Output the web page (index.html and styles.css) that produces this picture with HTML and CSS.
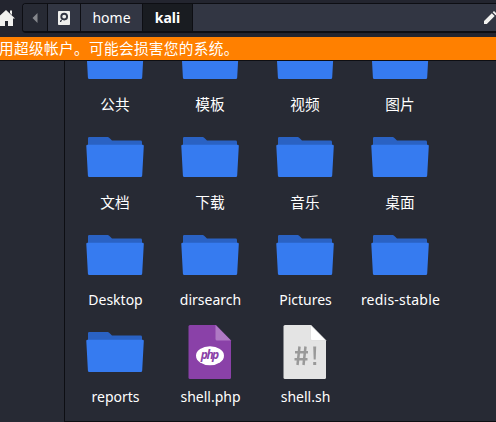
FILE: index.html
```html
<!DOCTYPE html>
<html lang="zh-CN">
<head>
<meta charset="utf-8">
<title>kali</title>
<link rel="stylesheet" href="styles.css">
</head>
<body>
<svg width="0" height="0" class="defs">
  <symbol id="folder" viewBox="0 0 64 64">
    <path fill="#2a62c4" d="M5 26V13.2Q5 12 6.2 12H24.5Q25.500 12 26.200 12.700L29 15.600H57.500Q59 15.600 59 17V26Z"/>
    <path fill="#367bf0" d="M4.500 19.700H59.600Q60.900 19.700 60.800 21L59.200 50.500Q59.100 52 57.800 52H6.200Q5 52 4.900 50.500L3.300 21Q3.200 19.700 4.500 19.700Z"/>
  </symbol>
</svg>
<header class="toolbar">
  <svg class="home" width="17" height="18" viewBox="0 0 17 18"><path fill="#f1f1ef" d="M6 1L15 9.500H13V17H8V12H5V17H-1V7.500ZM10 1.500H12V6L10 4Z"/></svg>
  <nav class="path">
    <span class="back"><svg width="6" height="10" viewBox="0 0 6 10"><path fill="#85878c" d="M5.500 0V10L.500 5Z"/></svg></span>
    <span class="crumb drive"><svg width="12" height="14" viewBox="0 0 12 14"><rect width="12" height="14" rx=".8" fill="#efefed"/><circle cx="6.200" cy="5.600" r="2.900" fill="none" stroke="#323643" stroke-width="1.900"/><path d="M2 9.500L4.500 8.500 3 11H2Z" fill="#323643"/></svg></span>
    <span class="crumb parent">home</span>
    <span class="crumb current">kali</span>
    <span class="rest"><svg width="14" height="14" viewBox="0 0 14 14"><path fill="#f1f1ef" d="M0 10L7.800 2.200 10.700 5.100 2.800 13H0ZM8.700 1.300L10 0 13 3 11.600 4.300Z"/></svg></span>
  </nav>
</header>
<div class="warning">用超级帐户。可能会损害您的系统。</div>
<div class="main">
  <aside class="side"></aside>
  <main class="files">
    <div class="file zh"><svg class="icon"><use href="#folder"/></svg><span>公共</span></div>
    <div class="file zh"><svg class="icon"><use href="#folder"/></svg><span>模板</span></div>
    <div class="file zh"><svg class="icon"><use href="#folder"/></svg><span>视频</span></div>
    <div class="file zh"><svg class="icon"><use href="#folder"/></svg><span>图片</span></div>
    <div class="file zh"><svg class="icon"><use href="#folder"/></svg><span>文档</span></div>
    <div class="file zh"><svg class="icon"><use href="#folder"/></svg><span>下载</span></div>
    <div class="file zh"><svg class="icon"><use href="#folder"/></svg><span>音乐</span></div>
    <div class="file zh"><svg class="icon"><use href="#folder"/></svg><span>桌面</span></div>
    <div class="file"><svg class="icon"><use href="#folder"/></svg><span>Desktop</span></div>
    <div class="file"><svg class="icon"><use href="#folder"/></svg><span>dirsearch</span></div>
    <div class="file"><svg class="icon"><use href="#folder"/></svg><span>Pictures</span></div>
    <div class="file loose"><svg class="icon"><use href="#folder"/></svg><span>redis-stable</span></div>
    <div class="file"><svg class="icon"><use href="#folder"/></svg><span>reports</span></div>
    <div class="file">
      <svg class="icon" viewBox="0 0 64 64">
        <path fill="#8a41a8" d="M12 5H38L53 20.500V57.500Q53 59 51.500 59H12Q10.500 59 10.500 57.500V6.500Q10.500 5 12 5Z"/>
        <path fill="#af79c4" d="M37.500 5L53 20.500H39Q37.500 20.500 37.500 19Z"/>
        <ellipse cx="32" cy="35.800" rx="14" ry="9.500" fill="#fff"/>
        <text class="php" x="32" y="39" text-anchor="middle" textLength="18.500">php</text>
      </svg><span>shell.php</span></div>
    <div class="file">
      <svg class="icon" viewBox="0 0 64 64">
        <path fill="#e4e4e4" d="M12 5H38L53 20.500V57.500Q53 59 51.500 59H12Q10.500 59 10.500 57.500V6.500Q10.500 5 12 5Z"/>
        <path fill="#fff" stroke="#d0d0d0" stroke-width=".5" d="M37.500 5L53 20.500H39Q37.500 20.500 37.500 19Z"/>
        <path fill="none" stroke="#999" stroke-width="2.500" d="M26.500 26.500L24.500 45M32.500 26.500L30.500 45M22 32.300H35M21.500 39.300H34.500"/>
        <path fill="#999" d="M40.200 26.500H43.200L42.700 39.500H40.700ZM40.200 42H43.200V45H40.200Z"/>
      </svg><span>shell.sh</span></div>
  </main>
</div>
</body>
</html>
```
FILE: styles.css
```css
* { box-sizing: border-box; }
body {
  margin: 0;
  height: 422px;
  overflow: hidden;
  display: flex;
  flex-direction: column;
  background: #272a34;
  color: #fff;
  font: 14px/20px "Noto Sans", "Noto Sans CJK SC", sans-serif;
}
.defs { position: absolute; }
.toolbar {
  height: 37px;
  flex: none;
  display: flex;
  padding-top: 3px;
  background: #23252f;
}
.home { margin: 6px 5px 0 0; flex: none; }
.path {
  flex: 1;
  height: 30px;
  display: flex;
  border: 1px solid #0d0e13;
  border-bottom-width: 2px;
  border-right: 0;
  border-radius: 4px 0 0 4px;
  background: #323643;
  overflow: hidden;
}
.back, .crumb {
  display: flex;
  align-items: center;
  justify-content: center;
  border-right: 1px solid #0d0e13;
}
.back { width: 25px; background: #272a34; }
.drive { width: 33px; }
.parent { width: 62px; }
.current { width: 50px; background: #191c21; font-weight: 700; }
.rest {
  flex: 1;
  display: flex;
  align-items: center;
  justify-content: flex-end;
  margin-right: -2px;
}
.warning {
  height: 24px;
  flex: none;
  border-bottom: 1px solid #0d0e13;
  background: #ff8000;
  line-height: 23px;
  font-size: 14.67px;
  letter-spacing: .33px;
  text-indent: -1px;
  white-space: nowrap;
}
.main {
  flex: 1;
  min-height: 0;
  display: flex;
}
.side { width: 65px; border-right: 1px solid #0d0e13; }
.files {
  flex: 1;
  overflow: hidden;
  display: grid;
  grid-template-columns: repeat(4, 95px);
  grid-template-rows: 98px 98px 97px 97px;
  align-content: end;
  padding: 0 0 4px 2px;
  border-bottom: 1px solid #0d0e13;
}
.file {
  display: flex;
  flex-direction: column;
  align-items: center;
  gap: 3px;
}
.icon { width: 64px; height: 64px; flex: none; }
.file span { padding-left: 2px; }
.zh span { padding-left: 1px; font-size: 14.67px; }
.loose span { letter-spacing: .22px; }
.php { font: italic 700 12px "Open Sans", sans-serif; fill: #8a41a8; }
```
